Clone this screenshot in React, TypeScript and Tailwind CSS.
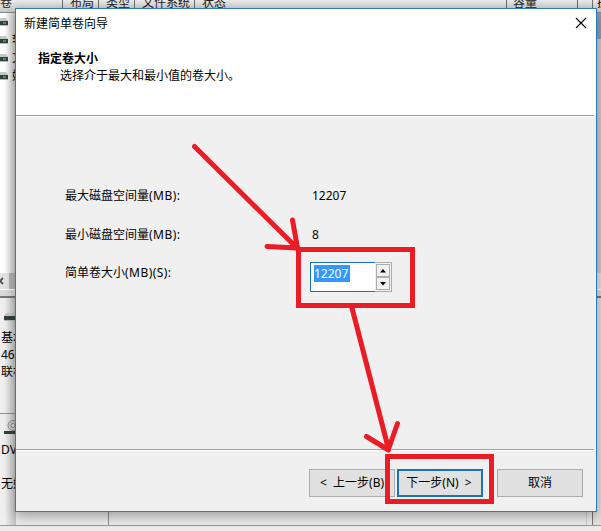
import { ReactNode } from "react";
import { clsx } from "clsx";

interface WizardButtonProps {
  children: ReactNode;
  primary?: boolean;
  className?: string;
}

function WizardButton({ children, primary, className }: WizardButtonProps) {
  return (
    <button
      className={clsx(
        "w-[86px] h-7 bg-[#e1e1e1] flex items-center justify-center whitespace-pre",
        primary ? "border-2 border-[#1b72b8]" : "border border-[#adadad]",
        className
      )}
    >
      {children}
    </button>
  );
}

interface FieldRowProps {
  label: string;
  unit: string;
  children: ReactNode;
  className?: string;
}

function FieldRow({ label, unit, children, className }: FieldRowProps) {
  return (
    <div className={clsx("flex", className)}>
      <span className="w-[247px] leading-4">
        {label}
        <span className="tracking-[0.45px]">{unit}</span>
      </span>
      {children}
    </div>
  );
}

function DriveIcon({ className }: { className?: string }) {
  return (
    <svg className={clsx("shrink-0", className)} width="16" height="8" viewBox="0 0 16 8">
      <path d="M2 0h12l2 3H0z" fill="#c3cdc8" />
      <path d="M0 3h16v4H0z" fill="#34413c" />
      <path d="M11 4h3v2h-3z" fill="#4f8e5e" />
      <path d="M0 7h16v1H0z" fill="#b4beb9" />
    </svg>
  );
}

const columns = [
  { name: "卷", width: "w-[63px] pl-0" },
  { name: "布局", width: "w-9 pl-[7px]" },
  { name: "类型", width: "w-9 pl-[7px]" },
  { name: "文件系统", width: "w-[60px] pl-[7px]" },
  { name: "状态", width: "w-[312px] pl-[7px]" },
  { name: "容量", width: "w-[71px] pl-[6px]" },
  { name: "", width: "w-[15px]" },
];

const volumes = ["", "软", "文", "娱"];

// Disk management window behind the dialog
function DiskManager() {
  return (
    <div className="w-[601px] h-[531px] overflow-hidden bg-[#ececec] flex flex-col">
      <div className="h-[13px] flex shrink-0 bg-linear-to-b from-[#ebebeb] to-[#c9c9c9] border-b border-[#8a8a8a]">
        {columns.map((col, i) => (
          <div key={i} className={clsx("shrink-0 h-4 border-r border-[#6e6e6e] leading-4 -mt-[5px] text-[#222]", col.width)}>
            {col.name}
          </div>
        ))}
        <span className="pl-1 -mt-[5px] leading-4 shrink-0">操</span>
      </div>
      <div className="h-[260px] flex justify-between shrink-0">
        <div className="w-4 bg-linear-to-r from-white from-30% to-[#c9c9c9]">
          {volumes.map((name, i) => (
            <div key={i} className="h-[18px] flex items-center">
              <DriveIcon className="-ml-2" />
              <span className="ml-1 shrink-0">{name}</span>
            </div>
          ))}
        </div>
        <div className="w-[5px] bg-[#d2cccc]">
          <div className="h-[26px] bg-[#8ba0b8]" />
        </div>
      </div>
      <div className="h-4 flex shrink-0 bg-[#e4e4e4] items-center">
        <svg width="9" height="16" viewBox="0 0 9 16" fill="none" stroke="#505050" strokeWidth="1.8">
          <path d="M3 5 L0 8 L3 11" />
        </svg>
        <div className="w-2 h-full bg-[#b5b5b5]" />
      </div>
      <div className="h-[7px] shrink-0 bg-[#dcdcdc] border-t border-white" />
      <div className="flex h-[230px] shrink-0 border-t-2 border-b border-t-[#777] border-b-[#999]">
        <div className="w-4 shrink-0 bg-linear-to-r from-[#f0f0f0] from-30% to-[#c4c4c4]">
          <div className="h-[116px] pt-[15px] border-b border-[#909090]">
            <DriveIcon className="ml-1" />
            <div className="mt-[8px] ml-px leading-[17px] whitespace-nowrap">
              <p>基本</p>
              <p>465</p>
              <p>联机</p>
            </div>
          </div>
          <div className="pt-1.5">
            <svg className="max-w-none" width="20" height="15" viewBox="0 0 20 15">
              <circle cx="13" cy="5.500" r="5" fill="#d0d0d0" stroke="#8d8d8d" />
              <circle cx="13" cy="5.500" r="2" fill="#eee" stroke="#777" />
              <path d="M4 11h16v3H4z" fill="#34413c" />
            </svg>
            <div className="mt-[6px] ml-px leading-[17px] whitespace-nowrap">
              <p>DVD</p>
              <p className="mt-[17px]">无媒</p>
            </div>
          </div>
        </div>
        <div className="w-[93px] shrink-0 border-r border-[#909090]" />
        <div className="w-[478px] shrink-0 border-r border-[#d0d0d0]" />
        <div className="w-1.5 shrink-0 border-r border-[#777]" />
        <div className="flex-1 bg-[#e4e0e0]" />
      </div>
    </div>
  );
}

function Annotations() {
  return (
    <svg
      className="absolute inset-0"
      width="601"
      height="531"
      viewBox="0 0 601 531"
      fill="none"
      stroke="#ea1c25"
      strokeWidth="5"
      strokeLinecap="round"
    >
      <path d="M194.500 146.500 L297 248 M292.500 220 L297.500 248 M267 246.500 L297 248" />
      <rect x="298.500" y="249.500" width="114" height="56" />
      <path d="M352 308 L388.500 449 M366.500 436.500 L388.500 450 M397.500 423.500 L388.500 449" />
      <rect x="387.500" y="456.500" width="104" height="45" />
    </svg>
  );
}

export default function App() {
  return (
    <div className="relative w-[601px] h-[531px] overflow-hidden text-xs text-black font-['Noto_Sans','Noto_Sans_CJK_SC',sans-serif]">
      <DiskManager />

      {/* Wizard dialog */}
      <div className="absolute left-[15px] top-2 w-[582px] h-[504px] border border-[#2b7bbd] bg-[#f0f0f0] flex flex-col shadow-[0_4px_12px_rgba(0,0,0,0.35)]">
        <div className="h-[106px] shrink-0 bg-white">
          <div className="flex justify-between items-start pt-[7px] pl-2 pr-[9px]">
            <span className="leading-4">新建简单卷向导</span>
            <svg className="mt-px" width="12" height="12" viewBox="0 0 12 12" stroke="black" strokeWidth="1.1">
              <path d="M1 1 L11 11 M11 1 L1 11" />
            </svg>
          </div>
          <h1 className="mt-[19px] ml-[22px] leading-4 font-bold">指定卷大小</h1>
          <p className="mt-px ml-[44px] leading-4">选择介于最大和最小值的卷大小。</p>
        </div>
        <div className="h-[2px] mr-[2px] shrink-0 bg-[#a0a0a0] border-b border-white" />

        <div className="h-[332px] shrink-0 pl-[49px] pt-[71px]">
          <FieldRow label="最大磁盘空间量" unit="(MB):">
            <span className="leading-4">12207</span>
          </FieldRow>
          <FieldRow label="最小磁盘空间量" unit="(MB):" className="mt-[23px]">
            <span className="leading-4">8</span>
          </FieldRow>
          <FieldRow label="简单卷大小" unit="(MB)(S):" className="mt-[22px]">
            <div className="-ml-[2px] -mt-[3px] w-[82px] h-[30px] flex border border-[#adadad] bg-white">
              <div className="w-[65px] -m-px pt-[2px] pl-[3px] border border-r-0 border-[#1b72b8]">
                <span className="block w-9 h-[17px] leading-[17px] bg-[#3399ff] text-white">12207</span>
              </div>
              <div className="flex-1 ml-px p-px flex flex-col bg-[#f0f0f0]">
                <button className="flex-1 border border-[#adadad] flex items-center justify-center">
                  <svg width="6" height="4" viewBox="0 0 6 4">
                    <path d="M3 0 L6 3.500 H0z" />
                  </svg>
                </button>
                <button className="flex-1 border border-[#adadad] flex items-center justify-center">
                  <svg width="6" height="4" viewBox="0 0 6 4">
                    <path d="M3 3.500 L6 0 H0z" />
                  </svg>
                </button>
              </div>
            </div>
          </FieldRow>
        </div>

        <div className="h-[2px] mr-[2px] shrink-0 bg-[#a0a0a0] border-b border-white" />
        <div className="flex justify-end pt-[18px] pr-[13px]">
          <WizardButton>{"<  上一步(B)"}</WizardButton>
          <WizardButton primary className="ml-0.5 pr-0.5">{"下一步(N)  >"}</WizardButton>
          <WizardButton className="ml-3.5">取消</WizardButton>
        </div>
      </div>

      <Annotations />
    </div>
  );
}
